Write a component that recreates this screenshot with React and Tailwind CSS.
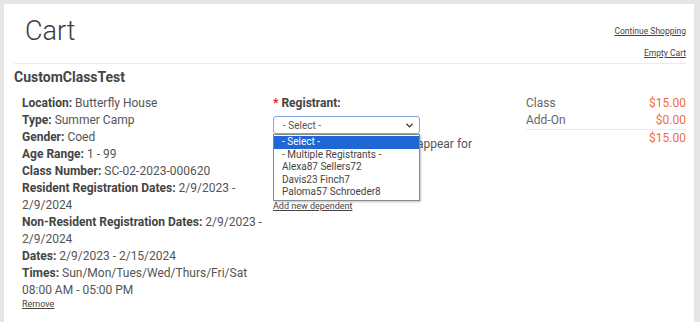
import { ChevronDown } from 'lucide-react';

const details = [
    ['Location:', 'Butterfly House'],
    ['Type:', 'Summer Camp'],
    ['Gender:', 'Coed'],
    ['Age Range:', '1 - 99'],
    ['Class Number:', 'SC-02-2023-000620'],
    ['Resident Registration Dates:', '2/9/2023 - 2/9/2024'],
    ['Non-Resident Registration Dates:', '2/9/2023 - 2/9/2024'],
    ['Dates:', '2/9/2023 - 2/15/2024'],
    ['Times:', 'Sun/Mon/Tues/Wed/Thurs/Fri/Sat 08:00 AM - 05:00 PM'],
];

const options = ['- Select -', '- Multiple Registrants -', 'Alexa87 Sellers72', 'Davis23 Finch7', 'Paloma57 Schroeder8'];

export default function App() {
    return (
        <div
            className="w-[700px] h-[322px] bg-[#e6e6e6] pt-[4px] pl-[4px] pr-[6px] text-[#555] overflow-hidden"
            style={{ fontFamily: 'Roboto, "Liberation Sans", sans-serif' }}
        >
            <div className="bg-white h-full pl-[10px] pr-[8px]">
                {/* Header */}
                <div className="flex justify-between h-[60px] border-b border-[#ececec]">
                    <h1 className="pl-[11px] mt-[11px] text-[27px] leading-[32px] font-light text-[#3c3c3c]">Cart</h1>
                    <div className="flex flex-col items-end text-[8.5px] leading-[12px] text-[#444]">
                        <a className="underline mt-[21px]">Continue Shopping</a>
                        <a className="underline mt-[10px]">Empty Cart</a>
                    </div>
                </div>

                <h2 className="mt-[4px] text-[14px] leading-[18px] font-bold text-[#444]">CustomClassTest</h2>

                <div className="flex mt-[9px] text-[12px] leading-[17px]">
                    {/* Class details */}
                    <div className="w-[252px] pl-[8px]">
                        {details.map(([label, value]) => (
                            <div key={label}>
                                <span className="font-bold text-[#444]">{label}</span> {value}
                            </div>
                        ))}
                        <a className="block underline text-[9px] leading-[10px] text-[#444]">Remove</a>
                    </div>

                    {/* Registrant */}
                    <div className="w-[252px] pl-[7px]">
                        <div className="font-bold text-[#444]">
                            <span className="text-[#e02020]">*</span> Registrant:
                        </div>
                        <div className="relative w-[147px] mt-[4px]">
                            <div className="h-[18px] flex items-center justify-between border border-[#7da6e3] rounded-[3px] pl-[9px] pr-[4px] text-[10px] text-[#555]">
                                <span>- Select -</span>
                                <ChevronDown size={11} strokeWidth={3} className="text-[#333]" />
                            </div>
                            <div className="absolute top-full left-0 w-full bg-white border border-[#8a8a8a] shadow-[1px_1px_2px_rgba(0,0,0,0.25)] py-[1px] z-10 text-[10px] leading-[12.5px] text-[#444]">
                                {options.map((o, i) => (
                                    <div
                                        key={o}
                                        className={i === 0 ? 'pl-[8px] bg-[#1e67d4] text-white' : 'pl-[8px]'}
                                    >
                                        {o}
                                    </div>
                                ))}
                            </div>
                        </div>
                        <p className="mt-[2px]">All eligible dependents will appear for selection.</p>
                        <a className="block underline text-[9px] leading-[10px] text-[#444] mt-[31px]">Add new dependent</a>
                    </div>

                    {/* Totals */}
                    <div className="flex-1 pl-[8px]">
                        <div className="flex justify-between">
                            <span className="text-[#666]">Class</span>
                            <span className="text-[#f26b3f]">$15.00</span>
                        </div>
                        <div className="flex justify-between border-b border-[#ececec]">
                            <span className="text-[#666]">Add-On</span>
                            <span className="text-[#f26b3f]">$0.00</span>
                        </div>
                        <div className="text-right text-[#f26b3f]">$15.00</div>
                    </div>
                </div>
            </div>
        </div>
    );
}
